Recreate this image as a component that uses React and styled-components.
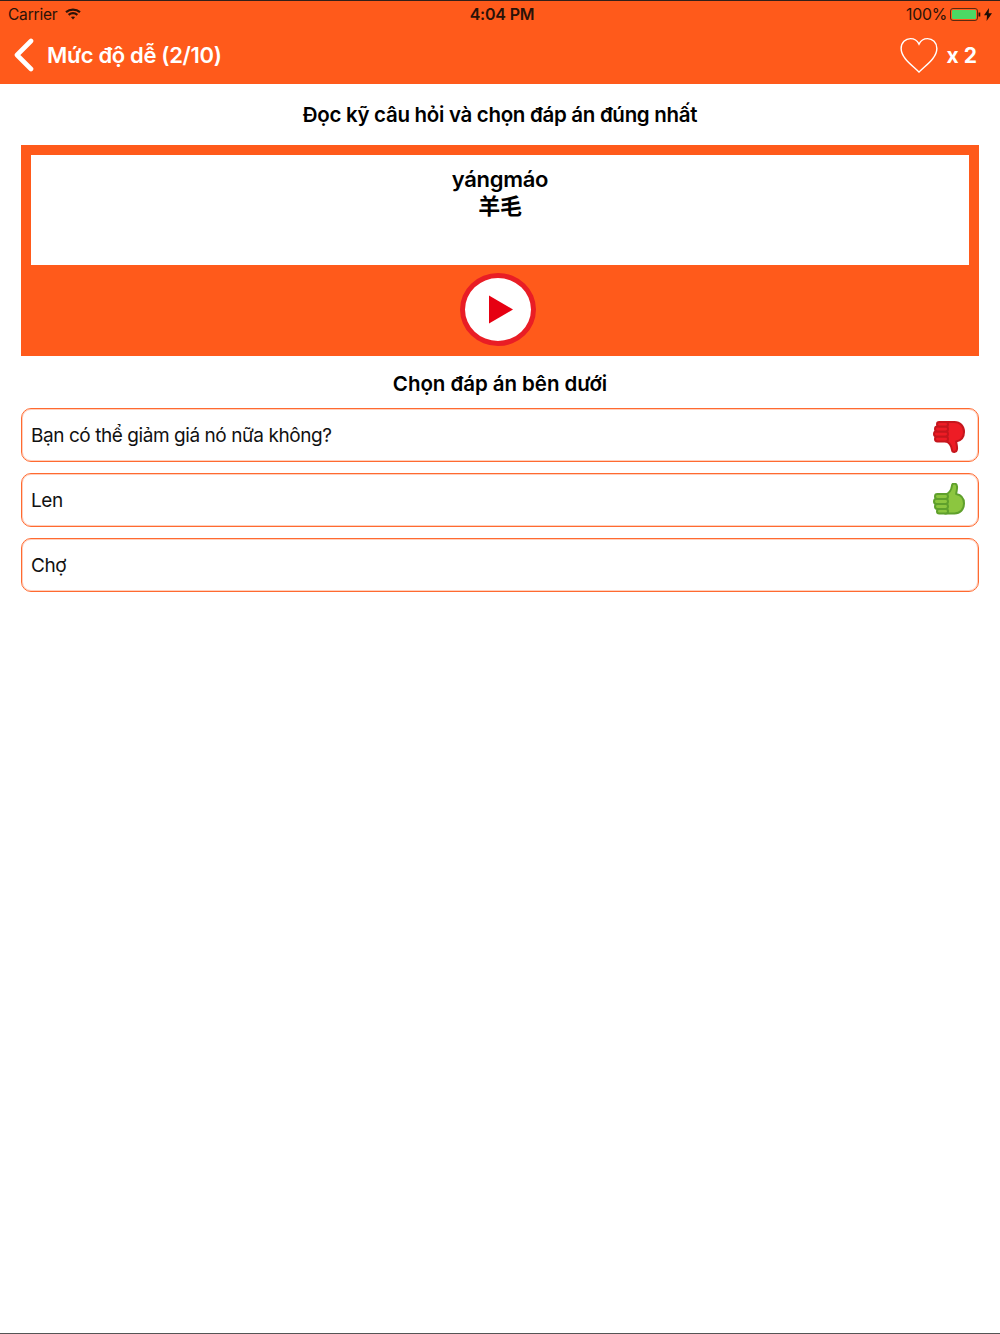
import React from "react";
import styled, { createGlobalStyle } from "styled-components";

const Global = createGlobalStyle`
  html, body { margin: 0; padding: 0; background: #fff; }
  body { font-family: Inter, "Noto Sans CJK SC", sans-serif; color: #000; }
`;
const Page = styled.div`
  width: 1000px; height: 1334px; box-sizing: border-box; overflow: hidden;
  display: flex; flex-direction: column; background: #fff;
  border-top: 1px solid #33201a; border-bottom: 1px solid #555;
`;
const Header = styled.header`
  height: 83px; background: #ff5a1b; display: flex; flex-direction: column; flex: none;
`;
const StatusBar = styled.div`
  height: 26px; display: grid; grid-template-columns: 1fr auto 1fr; align-items: center;
  padding: 0 8px; font-size: 15.500px; color: #2a1208; letter-spacing: -0.2px;
`;
const StatusLeft = styled.div`display: flex; align-items: center; gap: 8px;`;
const Clock = styled.div`font-weight: 600; font-size: 16px; color: #2a1208; margin-left: 4px;`;
const StatusRight = styled.div`display: flex; align-items: center; justify-content: flex-end; gap: 3px; font-size: 15.800px;`;
const NavBar = styled.div`
  flex: 1; display: flex; align-items: center; justify-content: space-between; padding: 0 23px 0 13px; margin-top: -1px;
`;
const NavLeft = styled.div`display: flex; align-items: center; gap: 12px;`;
const NavTitle = styled.div`color: #fff; font-weight: 600; font-size: 22px; letter-spacing: -0.35px;`;
const Lives = styled.div`display: flex; align-items: center; gap: 9px; color: #fff; font-weight: 700; font-size: 21px;`;
const Main = styled.main`
  display: flex; flex-direction: column; padding: 0 21px; flex: 1;
`;
const Heading = styled.h2`
  margin: 0; text-align: center; font-size: 20.500px; font-weight: 600; letter-spacing: -0.3px;
  color: #000; line-height: 25px;
`;
const Prompt = styled(Heading)`padding: 18px 0 18px;`;
const Question = styled.section`
  background: #ff5a1b; height: 211px; padding: 10px; box-sizing: border-box;
  display: flex; flex-direction: column; align-items: center;
`;
const QuestionCard = styled.div`
  width: 100%; height: 110px; background: #fff; flex: none; padding-top: 12px; box-sizing: border-box;
  text-align: center; font-size: 22px; font-weight: 600; letter-spacing: -0.3px;
`;
const Phrase = styled.div`line-height: 24px;`;
const Hanzi = styled.div`font-family: "Noto Sans CJK SC", sans-serif; font-weight: 700; font-size: 22px; line-height: 26px;`;
const PlayButton = styled.div`
  width: 76px; height: 76px; margin: 8px 4px 0 0; border-radius: 50%; background: #fff; border: 5px solid #e91d25;
  box-sizing: border-box; display: flex; align-items: center; justify-content: center; padding-left: 6px;
`;
const AnswerHeading = styled(Heading)`padding: 15px 0 12px; letter-spacing: -0.05px;`;
const Answers = styled.div`display: flex; flex-direction: column; gap: 11px;`;
const Answer = styled.div`
  height: 54px; box-sizing: border-box; border: 1px solid #ff6a30; border-radius: 10px;
  box-shadow: inset 0 0 0 1px rgba(255, 120, 70, 0.35);
  display: flex; align-items: center; justify-content: space-between; padding: 0 12px 0 9px;
  font-size: 19px; letter-spacing: -0.44px; color: #111;
`;

const Wifi = () => (
  <svg width="16" height="12" viewBox="0 0 16 12" fill="none" stroke="#2a1208" strokeWidth="2.200">
    <path d="M1 4.200C5 .8 11 .8 15 4.200" />
    <path d="M3.600 6.900c2.600-2.100 6.200-2.100 8.800 0" />
    <path d="M8 11.500 5.900 9.100c1.200-.9 3-.9 4.200 0z" fill="#2a1208" stroke="none" />
  </svg>
);
const Battery = () => (
  <svg width="31" height="13" viewBox="0 0 31 13">
    <rect x=".5" y=".5" width="27" height="12" rx="2.500" fill="none" stroke="#5a2a10" />
    <rect x="2" y="2" width="24" height="9" rx="1" fill="#4cd964" />
    <rect x="28.500" y="4.500" width="1.800" height="4" fill="#2a1208" />
  </svg>
);
const Bolt = () => (
  <svg width="8" height="13" viewBox="0 0 8 13"><path d="M5 0 0 7.200h3L2.600 13 8 5.300H4.700z" fill="#1d0d06" /></svg>
);
const Chevron = () => (
  <svg width="22" height="34" viewBox="0 0 22 34" fill="none" stroke="#fff" strokeWidth="4.600" strokeLinecap="round" strokeLinejoin="round">
    <path d="M18 3 4 17l14 14" />
  </svg>
);
const Heart = () => (
  <svg width="38" height="37" viewBox="0 0 40 38" fill="none" stroke="#fff" strokeWidth="1.500">
    <path d="M20 36.500C14 30 1.200 22 1.200 11.600 1.200 5.500 5.800 1.200 11 1.200c4 0 7.300 2.300 9 5.800 1.700-3.500 5-5.800 9-5.800 5.200 0 9.800 4.300 9.800 10.400C38.800 22 26 30 20 36.500z" />
  </svg>
);
const Play = () => (
  <svg width="26" height="29" viewBox="0 0 26 29"><path d="M1 .5 25 14.500 1 28.500z" fill="#e60012" /></svg>
);
const ThumbShape = ({ fill, stroke }) => (
  <g fill={fill} stroke={stroke} strokeWidth="2" strokeLinejoin="round">
    <path d="M13 13c4-1 6.500-5 7-9 .2-2.500 4.500-3 5 .8.4 3-.8 5.500-.8 7.700 5 1 7.800 4.500 7.800 9.500 0 6-4 10-9.500 10H13z" />
    <rect x="3" y="12.500" width="13" height="5" rx="2.400" />
    <rect x="2" y="17.500" width="14" height="5" rx="2.400" />
    <rect x="3" y="22.500" width="13" height="5" rx="2.400" />
    <rect x="5" y="27.500" width="11" height="4.500" rx="2.200" />
  </g>
);
const ThumbUp = () => (
  <svg width="34" height="35" viewBox="0 1.500 34 35"><ThumbShape fill="#8cc63f" stroke="#5fa02c" /></svg>
);
const ThumbDown = () => (
  <svg width="34" height="35" viewBox="0 -1 34 35">
    <g transform="translate(0 35) scale(1 -1)"><ThumbShape fill="#ee1c25" stroke="#c5161d" /></g>
  </svg>
);

export default function App() {
  return (
    <Page>
      <Global />
      <Header>
        <StatusBar>
          <StatusLeft>Carrier <Wifi /></StatusLeft>
          <Clock>4:04 PM</Clock>
          <StatusRight>100% <Battery /><Bolt /></StatusRight>
        </StatusBar>
        <NavBar>
          <NavLeft><Chevron /><NavTitle>Mức độ dễ (2/10)</NavTitle></NavLeft>
          <Lives><Heart /> x 2</Lives>
        </NavBar>
      </Header>
      <Main>
        <Prompt>Đọc kỹ câu hỏi và chọn đáp án đúng nhất</Prompt>
        <Question>
          <QuestionCard>
            <Phrase>yángmáo</Phrase>
            <Hanzi>羊毛</Hanzi>
          </QuestionCard>
          <PlayButton><Play /></PlayButton>
        </Question>
        <AnswerHeading>Chọn đáp án bên dưới</AnswerHeading>
        <Answers>
          <Answer>Bạn có thể giảm giá nó nữa không?<ThumbDown /></Answer>
          <Answer>Len<ThumbUp /></Answer>
          <Answer>Chợ</Answer>
        </Answers>
      </Main>
    </Page>
  );
}
